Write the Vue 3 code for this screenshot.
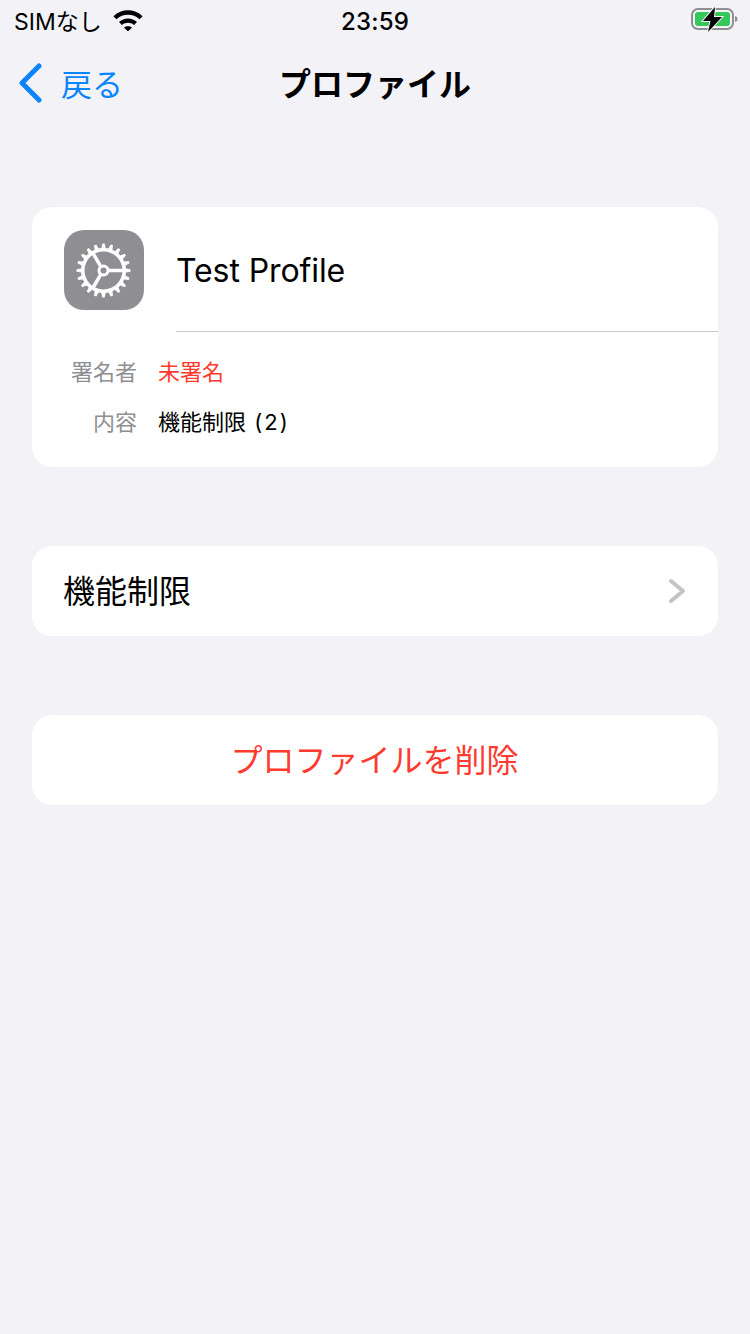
<template>
  <div class="page">
    <header class="status-bar">
      <div class="status-left">
        <span class="carrier">SIMなし</span>
        <svg class="wifi" width="30" height="22" viewBox="0 0 30 22">
          <path d="M.5 7.200C8.400 -.6 21.600 -.6 29.500 7.200l-3 3.100C20.300 4.400 9.700 4.400 3.500 10.300z" />
          <path d="M6 13C11 8.300 19 8.300 24 13l-3 3c-3.300-2.900-8.700-2.900-12 0z" />
          <path d="M11 18.500c2.300-1.800 5.700-1.800 8 0L15 22.500z" />
        </svg>
      </div>
      <span class="time">23:59</span>
      <div class="status-right">
        <svg width="50" height="28" viewBox="0 0 50 28">
          <rect x="2" y="3" width="41" height="20" rx="6" fill="none" stroke="#8e8e93" stroke-width="2" />
          <rect x="5" y="6" width="35" height="14" rx="3" fill="#34c759" />
          <path d="M45 10c1.700 .4 2.500 1.500 2.500 3s-.8 2.600-2.500 3z" fill="#8e8e93" />
          <path class="bolt-halo" d="M25 1 13 15h7.500L18 26l14-15h-8z" />
          <path d="M25 1 13 15h7.500L18 26l14-15h-8z" fill="#000" />
        </svg>
      </div>
    </header>

    <nav class="nav-bar">
      <a class="back">
        <svg width="26" height="40" viewBox="0 0 26 40">
          <path d="M21 3 4 20l17 17" fill="none" stroke="#0a84ff" stroke-width="5" stroke-linecap="round" stroke-linejoin="round" />
        </svg>
        <span>戻る</span>
      </a>
      <h1>プロファイル</h1>
    </nav>

    <main class="content">
      <section class="card profile">
        <div class="profile-head">
          <div class="app-icon">
            <svg width="80" height="80" viewBox="0 0 80 80">
              <path class="gear" :d="gearPath" />
              <path class="spokes" d="M44 40.500H62M36.500 36.200 28 21.500M36.500 44.800 28 59.500" />
              <circle class="hub" cx="39.500" cy="40.500" r="4.500" />
            </svg>
          </div>
          <div class="profile-name">Test Profile</div>
        </div>
        <dl class="details">
          <div class="detail-row">
            <dt>署名者</dt>
            <dd class="unsigned">未署名</dd>
          </div>
          <div class="detail-row">
            <dt>内容</dt>
            <dd>機能制限 <span class="count">(2)</span></dd>
          </div>
        </dl>
      </section>

      <section class="card row-card">
        <span class="row-label">機能制限</span>
        <svg width="18" height="26" viewBox="0 0 18 26">
          <path d="M3 3l12 10L3 23" fill="none" stroke="#c4c4c7" stroke-width="4" stroke-linecap="round" stroke-linejoin="round" />
        </svg>
      </section>

      <section class="card row-card delete">
        <span class="row-label">プロファイルを削除</span>
      </section>
    </main>
  </div>
</template>

<script setup>
// gear outline with trapezoid teeth, the hole is cut by evenodd
const cx = 39.5
const cy = 40.5

function point(radius, angle) {
  return `${(cx + radius * Math.cos(angle)).toFixed(2)} ${(cy + radius * Math.sin(angle)).toFixed(2)}`
}

function buildGear(teeth, outer, root, hole) {
  const step = (Math.PI * 2) / teeth
  const parts = []
  for (let i = 0; i < teeth; i++) {
    const a = i * step
    parts.push(point(root, a - step * 0.3))
    parts.push(point(outer, a - step * 0.14))
    parts.push(point(outer, a + step * 0.14))
    parts.push(point(root, a + step * 0.3))
  }
  const ring = `M${cx - hole} ${cy}a${hole} ${hole} 0 1 0 ${hole * 2} 0a${hole} ${hole} 0 1 0 ${-hole * 2} 0z`
  return 'M' + parts.join('L') + 'z' + ring
}

const gearPath = buildGear(20, 27, 22.5, 19)
</script>

<style>
body {
  background: #f2f2f7;
}
</style>

<style scoped>
.page {
  background: #f2f2f7;
  color: #000;
  font-family: Inter, "Noto Sans CJK JP", sans-serif;
  height: 1334px;
  overflow: hidden;
  width: 750px;
}

.status-bar {
  align-items: center;
  display: grid;
  grid-template-columns: 1fr auto 1fr;
  height: 40px;
  padding: 0 14px;
}

.status-left {
  align-items: center;
  display: flex;
  gap: 11px;
}

.carrier {
  font-size: 23px;
}

.wifi {
  fill: #000;
}

.time {
  font-size: 24px;
  font-weight: 500;
  letter-spacing: 0.2px;
  padding-top: 2px;
}

.status-right {
  display: flex;
  justify-content: flex-end;
  margin-right: -4px;
}

.nav-bar {
  align-items: center;
  box-sizing: border-box;
  display: flex;
  height: 88px;
  justify-content: center;
  padding-bottom: 4px;
  position: relative;
}

.nav-bar h1 {
  font-size: 32px;
  font-weight: 700;
  margin: 0;
}

.back {
  align-items: center;
  color: #0a84ff;
  display: flex;
  font-size: 31px;
  gap: 17px;
  left: 18px;
  position: absolute;
  top: 20px;
}

.content {
  display: flex;
  flex-direction: column;
  gap: 79px;
  padding: 79px 32px 0;
}

.card {
  background: #fff;
  border-radius: 20px;
}

.profile {
  height: 260px;
}

.profile-head {
  box-sizing: border-box;
  display: flex;
  height: 125px;
  padding: 23px 0 0 32px;
  position: relative;
}

.profile-head::after {
  background: #c8c8cc;
  bottom: 0;
  content: "";
  height: 1px;
  left: 144px;
  position: absolute;
  right: 0;
}

.app-icon {
  background: #8e8e93;
  border-radius: 20px;
  height: 80px;
  width: 80px;
}

.app-icon svg {
  display: block;
}

.gear {
  fill: #fff;
  fill-rule: evenodd;
}

.hub {
  fill: #8e8e93;
  stroke: #fff;
  stroke-width: 3;
}

.spokes {
  fill: none;
  stroke: #fff;
  stroke-width: 3.5;
}

.bolt-halo {
  fill: #f2f2f7;
  stroke: #f2f2f7;
  stroke-width: 2;
}

.profile-name {
  font-size: 32px;
  letter-spacing: -0.1px;
  line-height: 81px;
  margin-left: 32px;
}

.details {
  display: flex;
  flex-direction: column;
  gap: 14px;
  margin: 0;
  padding-top: 22px;
}

.detail-row {
  display: flex;
  font-size: 22px;
  gap: 21px;
  line-height: 36px;
}

.detail-row dt {
  color: #8e8e93;
  text-align: right;
  width: 105px;
}

.detail-row dd {
  margin: 0;
}

.count {
  letter-spacing: 2px;
  margin-left: 2px;
}

.unsigned {
  color: #ff3b30;
}

.row-card {
  align-items: center;
  display: flex;
  font-size: 32px;
  height: 90px;
  justify-content: space-between;
  padding: 0 32px;
}

.row-label {
  margin-left: -1px;
  margin-top: -4px;
}

.delete {
  color: #ff3b30;
  justify-content: center;
}
</style>
